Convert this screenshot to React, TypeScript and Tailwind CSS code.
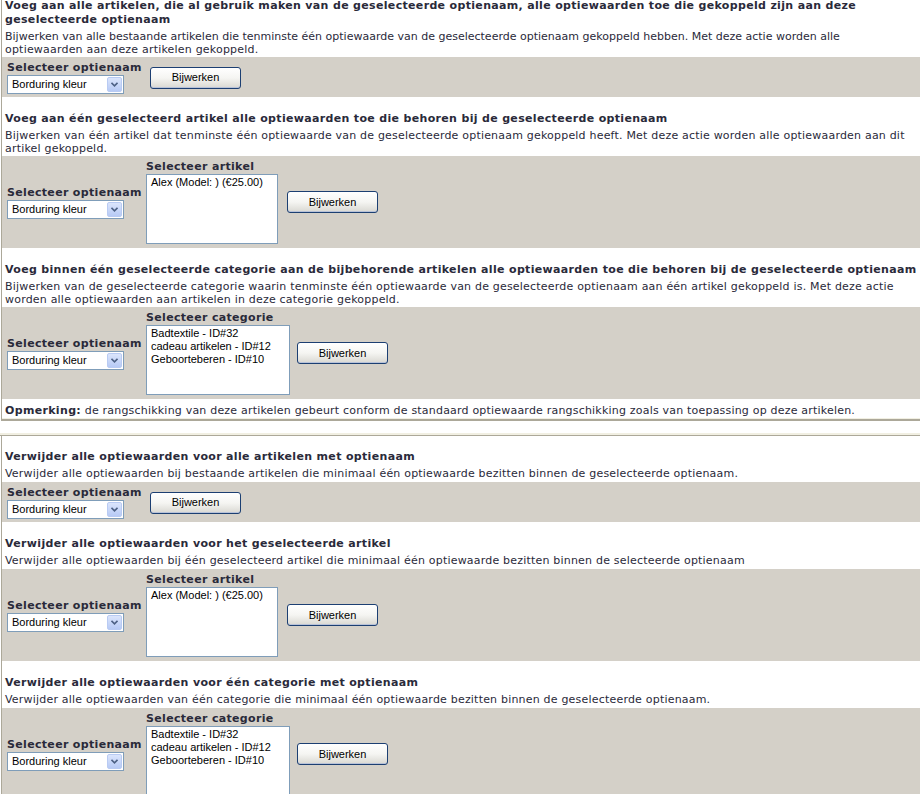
import React from 'react';

const textFont = "font-['DejaVu_Sans',Verdana,sans-serif] text-[11px] text-[#2a2a3a] tracking-[0.2px]";
const ctrlFont = "font-['Liberation_Sans',Arial,sans-serif] text-[11px] text-black tracking-normal";
const bold = 'font-bold tracking-[0.33px]';

const categories = ['Badtextile - ID#32', 'cadeau artikelen - ID#12', 'Geboorteberen - ID#10'];

const Dropdown = () => (
  <div className={`flex h-[19px] w-[117px] items-stretch border border-[#7f9db9] bg-white ${ctrlFont}`}>
    <span className="flex-1 pl-[4px] leading-[17px]">Borduring kleur</span>
    <span className="m-[1px] flex w-[15px] items-center justify-center rounded-[2px] border border-[#b9cbf3] bg-gradient-to-b from-[#dbe5fc] to-[#b7caf5]">
      <svg width="7" height="5" viewBox="0 0 7 5">
        <path d="M0.5 0.8 L3.5 3.8 L6.5 0.8" fill="none" stroke="#4d6185" strokeWidth="1.6" />
      </svg>
    </span>
  </div>
);

const UpdateButton = ({ className = '' }: { className?: string }) => (
  <button
    type="button"
    className={`flex h-[22px] w-[91px] items-center justify-center rounded-[3px] border border-[#1c3f72] bg-gradient-to-b from-white via-[#f5f5f2] to-[#d9d8d2] shadow-[inset_0_-1px_0_#b8c2d8] ${ctrlFont} ${className}`}
  >
    Bijwerken
  </button>
);

const Label = ({ children }: { children: React.ReactNode }) => (
  <div className={`whitespace-nowrap leading-[14px] ${bold}`}>{children}</div>
);

const OptionCell = () => (
  <div className="flex w-[139px] flex-col">
    <Label>Selecteer optienaam</Label>
    <Dropdown />
  </div>
);

const ListBox = ({ items, width }: { items: string[]; width: string }) => (
  <div className={`h-[70px] border border-[#7f9db9] bg-white px-[4px] pt-[1px] leading-[13px] ${width} ${ctrlFont}`}>
    {items.map((item) => (
      <div key={item} className="whitespace-nowrap">
        {item}
      </div>
    ))}
  </div>
);

const SimplePanel = () => (
  <div className="flex items-center bg-[#d4d0c8] pb-[3px] pl-[5px] pt-[4px]">
    <OptionCell />
    <UpdateButton className="ml-[4px]" />
  </div>
);

const ListPanel = ({ kind }: { kind: 'artikel' | 'categorie' }) => (
  <div className="flex items-center bg-[#d4d0c8] pl-[5px]">
    <OptionCell />
    <div className="flex flex-col pb-[4px] pt-[4px]">
      <Label>Selecteer {kind}</Label>
      {kind === 'artikel' ? (
        <ListBox items={['Alex (Model: ) (€25.00)']} width="w-[132px]" />
      ) : (
        <ListBox items={categories} width="w-[144px]" />
      )}
    </div>
    <UpdateButton className={kind === 'artikel' ? 'ml-[9px]' : 'ml-[7px]'} />
  </div>
);

const Block = ({
  title,
  desc,
  first,
  short,
  children,
}: {
  title: React.ReactNode;
  desc: React.ReactNode;
  first?: boolean;
  short?: boolean;
  children: React.ReactNode;
}) => (
  <div className={first ? '' : 'pt-[15px]'}>
    <div className={`mb-[3px] whitespace-nowrap px-[3px] leading-[14px] ${bold}`}>{title}</div>
    <div className={`whitespace-nowrap px-[3px] leading-[13px] ${short ? 'pb-[2px]' : 'pb-[1px]'}`}>{desc}</div>
    {children}
  </div>
);

export default function App() {
  return (
    <div className={`mt-[-1px] h-[795px] w-[920px] overflow-hidden bg-white ${textFont}`}>
      {/* toevoegen */}
      <div className="ml-[1px] border-l border-[#aca899]">
        <Block
          first
          title={
            <>
              Voeg aan alle artikelen, die al gebruik maken van de geselecteerde optienaam, alle optiewaarden toe die gekoppeld zijn aan deze
              <br />
              geselecteerde optienaam
            </>
          }
          desc={
            <>
              <span className="tracking-normal">
                Bijwerken van alle bestaande artikelen die tenminste één optiewaarde van de geselecteerde optienaam gekoppeld hebben. Met deze actie worden alle
              </span>
              <br />
              optiewaarden aan deze artikelen gekoppeld.
            </>
          }
        >
          <SimplePanel />
        </Block>

        <Block
          title="Voeg aan één geselecteerd artikel alle optiewaarden toe die behoren bij de geselecteerde optienaam"
          desc={
            <>
              Bijwerken van één artikel dat tenminste één optiewaarde van de geselecteerde optienaam gekoppeld heeft. Met deze actie worden alle optiewaarden aan dit
              <br />
              artikel gekoppeld.
            </>
          }
        >
          <ListPanel kind="artikel" />
        </Block>

        <Block
          title="Voeg binnen één geselecteerde categorie aan de bijbehorende artikelen alle optiewaarden toe die behoren bij de geselecteerde optienaam"
          desc={
            <>
              Bijwerken van de geselecteerde categorie waarin tenminste één optiewaarde van de geselecteerde optienaam aan één artikel gekoppeld is. Met deze actie
              <br />
              worden alle optiewaarden aan artikelen in deze categorie gekoppeld.
            </>
          }
        >
          <ListPanel kind="categorie" />
        </Block>

        <div className="whitespace-nowrap px-[3px] pb-[1px] pt-[5px] leading-[13px]">
          <span className={bold}>Opmerking:</span> de rangschikking van deze artikelen gebeurt conform de standaard optiewaarde rangschikking zoals van toepassing op deze artikelen.
        </div>
        <div className="h-[1px] bg-[#f1efe2]" />
        <div className="h-[2px] bg-[#aca899]" />
      </div>

      {/* verwijderen */}
      <div className="mt-[12px]">
        <div className="h-[2px] bg-[#f1efe2]" />
        <div className="h-[1px] bg-[#aca899]" />
        <div className="ml-[1px] border-l border-[#aca899] pt-[14px]">
          <Block
            first
            short
            title="Verwijder alle optiewaarden voor alle artikelen met optienaam"
            desc="Verwijder alle optiewaarden bij bestaande artikelen die minimaal één optiewaarde bezitten binnen de geselecteerde optienaam."
          >
            <SimplePanel />
          </Block>

          <Block
            short
            title="Verwijder alle optiewaarden voor het geselecteerde artikel"
            desc="Verwijder alle optiewaarden bij één geselecteerd artikel die minimaal één optiewaarde bezitten binnen de selecteerde optienaam"
          >
            <ListPanel kind="artikel" />
          </Block>

          <Block
            short
            title="Verwijder alle optiewaarden voor één categorie met optienaam"
            desc="Verwijder alle optiewaarden van één categorie die minimaal één optiewaarde bezitten binnen de geselecteerde optienaam."
          >
            <ListPanel kind="categorie" />
          </Block>
        </div>
      </div>
    </div>
  );
}
